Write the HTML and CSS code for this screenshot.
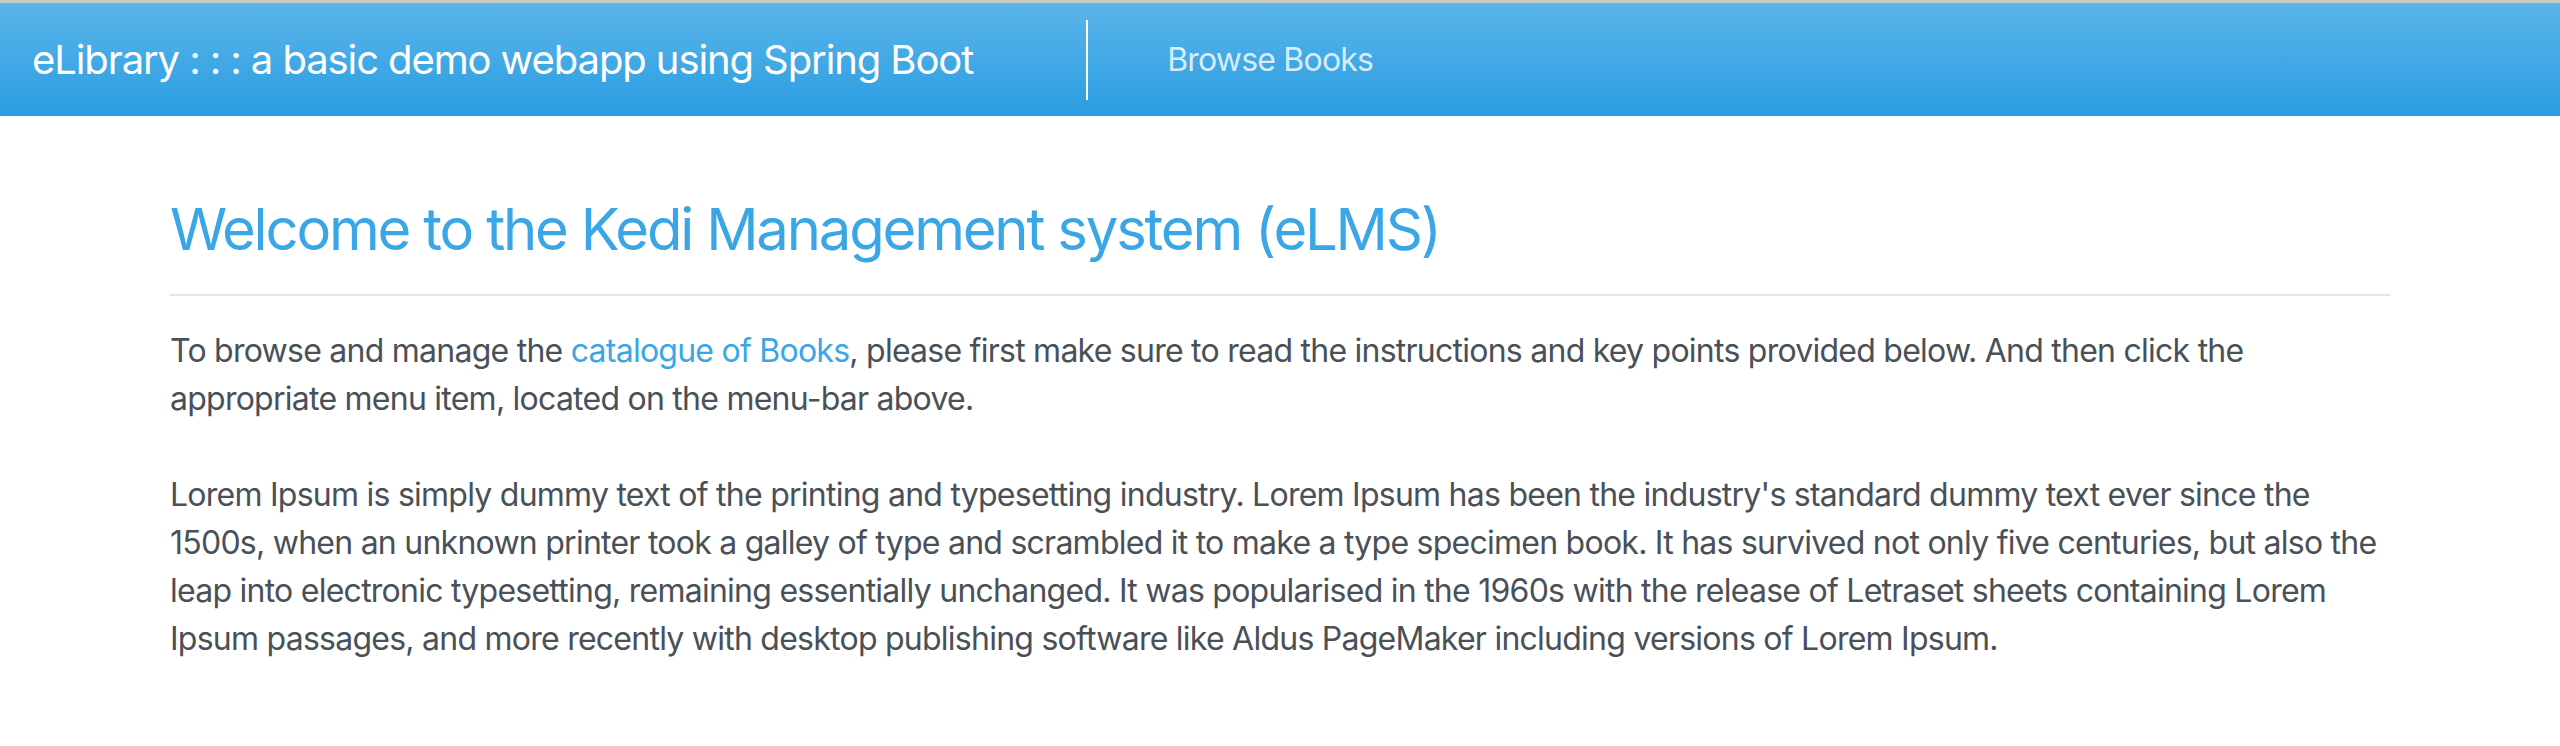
FILE: index.html
```html
<!DOCTYPE html>
<html lang="en">
<head>
<meta charset="utf-8">
<title>eLibrary</title>
<link rel="stylesheet" href="styles.css">
</head>
<body>
<div class="topline"></div>
<nav class="navbar">
  <a class="brand" href="#">eLibrary : : : a basic demo webapp using Spring Boot</a>
  <span class="divider"></span>
  <a class="nav-link" href="#">Browse Books</a>
</nav>
<main class="container">
  <h1 class="title">Welcome to the Kedi Management system (eLMS)</h1>
  <hr class="rule">
  <p class="text">To browse and manage the <a class="link" href="#">catalogue of Books</a>, please first make sure to read the instructions and key points provided below. And then click the<br>appropriate menu item, located on the menu-bar above.</p>
  <p class="text">Lorem Ipsum is simply dummy text of the printing and typesetting industry. Lorem Ipsum has been the industry's standard dummy text ever since the 1500s, when an unknown printer took a galley of type and scrambled it to make a type specimen book. It has survived not only five centuries, but also the leap into electronic typesetting, remaining essentially unchanged. It was popularised in the 1960s with the release of Letraset sheets containing Lorem Ipsum passages, and more recently with desktop publishing software like Aldus PageMaker including versions of Lorem Ipsum.</p>
</main>
</body>
</html>
```

FILE: styles.css
```css
html, body {
  margin: 0;
  padding: 0;
  background: #ffffff;
}
body {
  font-family: Inter, "Noto Sans", "Liberation Sans", sans-serif;
  color: #495057;
}
.topline {
  height: 3px;
  background: #c9c9c9;
}
.navbar {
  height: 113px;
  box-sizing: border-box;
  padding: 0 32px;
  display: flex;
  align-items: center;
  background: linear-gradient(to bottom, #5bb5ea 0%, #2a9de1 100%);
}
.brand {
  font-size: 40px;
  letter-spacing: -1.1px;
  color: #ffffff;
  text-decoration: none;
  white-space: nowrap;
  margin-right: 113px;
}
.divider {
  width: 2px;
  height: 80px;
  background: #ffffff;
  margin-right: 79px;
}
.nav-link {
  font-size: 32px;
  letter-spacing: -0.8px;
  color: rgba(255, 255, 255, 0.8);
  text-decoration: none;
}
.container {
  width: 2220px;
  margin: 0 auto;
  padding-top: 79px;
}
.title {
  margin: 0;
  font-size: 58px;
  font-weight: 400;
  letter-spacing: -2.2px;
  line-height: 1.2;
  color: #3aa6e6;
}
.rule {
  margin: 29px 0 31px;
  border: 0;
  border-top: 2px solid #e5e5e5;
}
.text {
  margin: 0 0 48px;
  font-size: 32px;
  letter-spacing: -0.75px;
  line-height: 48px;
}
.link {
  color: #3aa6e6;
  text-decoration: none;
}
```
